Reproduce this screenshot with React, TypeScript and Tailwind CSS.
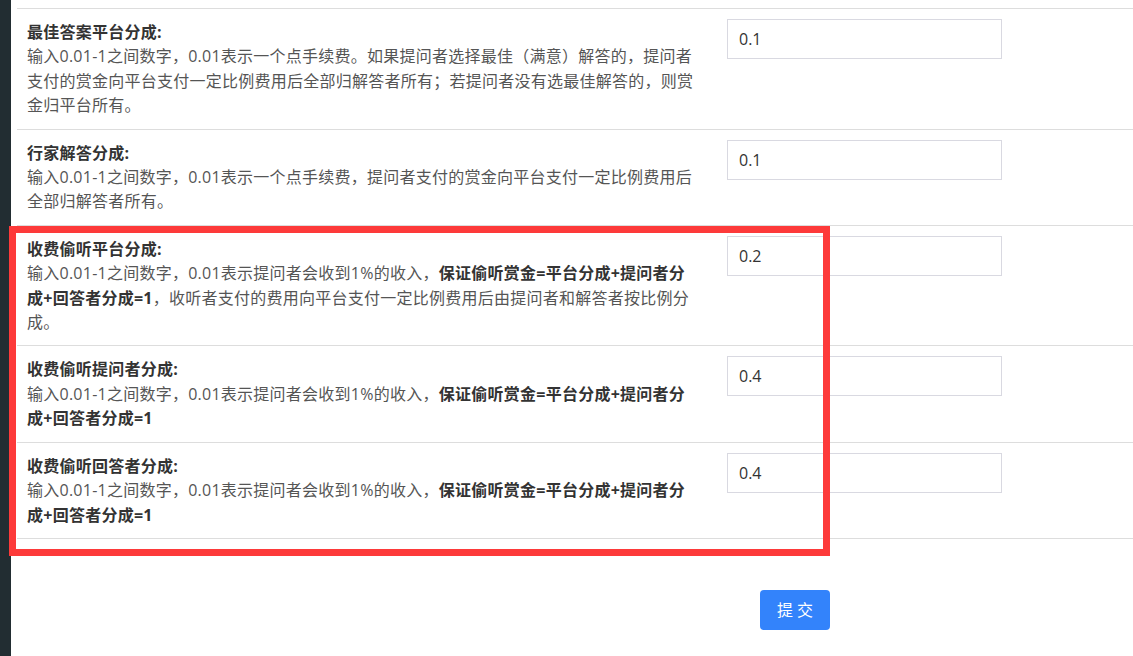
import { useState } from 'react';

const RULE = '保证偷听赏金=平台分成+提问者分成+回答者分成=1';

// 分成配置行（说明文字按原页面的折行）
const ROWS = [
  {
    title: '最佳答案平台分成:',
    lines: [
      '输入0.01-1之间数字，0.01表示一个点手续费。如果提问者选择最佳（满意）解答的，提问者',
      '支付的赏金向平台支付一定比例费用后全部归解答者所有；若提问者没有选最佳解答的，则赏',
      '金归平台所有。',
    ],
    value: '0.1',
  },
  {
    title: '行家解答分成:',
    lines: [
      '输入0.01-1之间数字，0.01表示一个点手续费，提问者支付的赏金向平台支付一定比例费用后',
      '全部归解答者所有。',
    ],
    value: '0.1',
  },
  {
    title: '收费偷听平台分成:',
    rule: true,
    tail: ['，收听者支付的费用向平台支付一定比例费用后由提问者和解答者按比例分', '成。'],
    value: '0.2',
  },
  { title: '收费偷听提问者分成:', rule: true, value: '0.4' },
  { title: '收费偷听回答者分成:', rule: true, value: '0.4' },
];

const RuleText = ({ tail }: { tail?: string[] }) => (
  <>
    <div>
      输入0.01-1之间数字，0.01表示提问者会收到1%的收入，
      <b className="font-bold text-[#333]">{RULE.slice(0, 16)}</b>
    </div>
    <div>
      <b className="font-bold text-[#333]">{RULE.slice(16)}</b>
      {tail && tail[0]}
    </div>
    {tail && <div>{tail[1]}</div>}
  </>
);

const App = () => {
  const [values, setValues] = useState(ROWS.map(r => r.value));

  return (
    <div className="relative flex min-h-[656px] w-[1133px] overflow-hidden bg-white font-['Open_Sans','Noto_Sans_CJK_SC',sans-serif]">
      {/* 左侧边栏 */}
      <div className="w-[11px] shrink-0 bg-[#222d32]" />

      <div className="flex-1 pl-[6px] pt-[8px]">
        {ROWS.map((r, i) => (
          <div key={i} className="flex w-[1200px] border-t border-[#dddddd]">
            <div className="w-[700px] shrink-0 whitespace-nowrap pl-[10px] pt-[11px] pb-[11px] text-[16px] leading-[24.4px] tracking-[0.25px]">
              <div className="font-bold text-[#333]">{r.title}</div>
              <div className="text-[#555]">
                {r.rule ? <RuleText tail={r.tail} /> : r.lines?.map((l, j) => <div key={j}>{l}</div>)}
              </div>
            </div>
            <div className="pl-[10px] pt-[10px]">
              <input
                value={values[i]}
                onChange={e => setValues(v => v.map((x, j) => (j === i ? e.target.value : x)))}
                className="h-[40px] w-[275px] border border-[#d9d9e1] bg-white px-[11px] text-[16px] text-[#333] outline-none"
              />
            </div>
          </div>
        ))}
        <div className="flex w-[1200px] border-t border-[#dddddd] pt-[51px] pb-[27px]">
          <div className="w-[700px] shrink-0" />
          <div className="pl-[43px]">
            <button className="h-[40px] w-[70px] rounded-[4px] bg-[#3383fb] text-[16px] text-white">
              提 交
            </button>
          </div>
        </div>
      </div>

      {/* 红框标注 */}
      <div className="pointer-events-none absolute left-[9px] top-[226px] h-[330px] w-[821px] border-[7px] border-[#fd3a3a]" />
    </div>
  );
};

export default App;
